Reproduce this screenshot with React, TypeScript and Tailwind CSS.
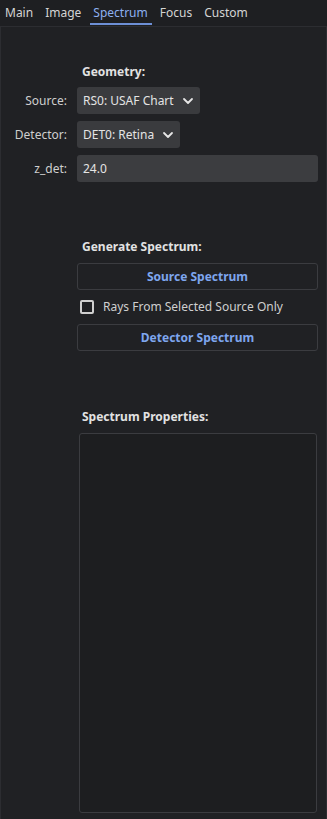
import React from 'react'

const tabs = ['Main', 'Image', 'Spectrum', 'Focus', 'Custom']

const Chevron = () => (
  <svg width="12" height="12" viewBox="0 0 12 12" className="shrink-0">
    <path d="M2 4 L6 8 L10 4" fill="none" stroke="#e6e6e6" strokeWidth="1.8" strokeLinecap="round" strokeLinejoin="round" />
  </svg>
)

const Combo = ({ text }: { text: string }) => (
  <div className="flex h-[27px] items-center gap-[8px] justify-self-start rounded-[3px] bg-[#3a3b3e] pl-[6px] pr-[6px] text-[#e4e4e4]">
    <span>{text}</span>
    <Chevron />
  </div>
)

const Label = ({ children }: { children: React.ReactNode }) => (
  <div className="flex h-[27px] items-center justify-end text-[#cfcfcf]">{children}</div>
)

const Header = ({ children }: { children: React.ReactNode }) => (
  <div className="pl-[5px] text-[12px] leading-[18px] font-bold text-[#e2e2e2]">{children}</div>
)

const Button = ({ children }: { children: React.ReactNode }) => (
  <div className="flex h-[27px] items-center justify-center rounded-[3px] border border-[#3b3c40] text-[12px] font-bold text-[#7ea6ee]">
    {children}
  </div>
)

export default function App() {
  return (
    <div className="flex h-[819px] w-[327px] flex-col overflow-hidden bg-[#1e1f22] text-[12px] leading-[18px]" style={{ fontFamily: '"Noto Sans", "Open Sans", sans-serif' }}>
      <div className="flex h-[26px] items-center gap-[12px] pl-[5px]">
        {tabs.map((t) => (
          <div key={t} className="relative flex h-full items-center">
            <span className={t === 'Spectrum' ? 'text-[#8db0f0]' : 'text-[#d4d4d4]'}>{t}</span>
            {t === 'Spectrum' && <div className="absolute bottom-[1px] left-[-3px] right-[-4px] h-[2px] bg-[#6d8fd6]" />}
          </div>
        ))}
      </div>
      <div className="flex flex-1 flex-col border-l border-r border-t border-[#2c2d31] bg-[#202124] pr-[8px]">
        <div className="ml-[76px] mt-[36px]">
          <Header>Geometry:</Header>
        </div>
        <div className="mt-[6px] grid grid-cols-[66px_1fr] gap-x-[10px] gap-y-[7px]">
          <Label>Source:</Label>
          <Combo text="RS0: USAF Chart" />
          <Label>Detector:</Label>
          <Combo text="DET0: Retina" />
          <Label>z_det:</Label>
          <div className="flex h-[27px] items-center rounded-[3px] bg-[#3c3d40] pl-[6px] text-[#e4e4e4]">24.0</div>
        </div>

        <div className="ml-[76px] mt-[56px] flex flex-col">
          <Header>Generate Spectrum:</Header>
          <div className="mt-[7px]">
            <Button>Source Spectrum</Button>
          </div>
          <div className="flex h-[34px] items-center gap-[9px] pl-[3px]">
            <div className="h-[14px] w-[14px] rounded-[2px] border-2 border-[#d0d0d0]" />
            <span className="text-[#cfcfcf]">Rays From Selected Source Only</span>
          </div>
          <Button>Detector Spectrum</Button>
        </div>

        <div className="ml-[76px] mt-[57px] flex flex-1 flex-col pb-[6px]">
          <Header>Spectrum Properties:</Header>
          <div className="mt-[7px] ml-[2px] mr-[1px] flex-1 rounded-[3px] border border-[#3b3c40] bg-[#1d1e20]" />
        </div>
      </div>
    </div>
  )
}
